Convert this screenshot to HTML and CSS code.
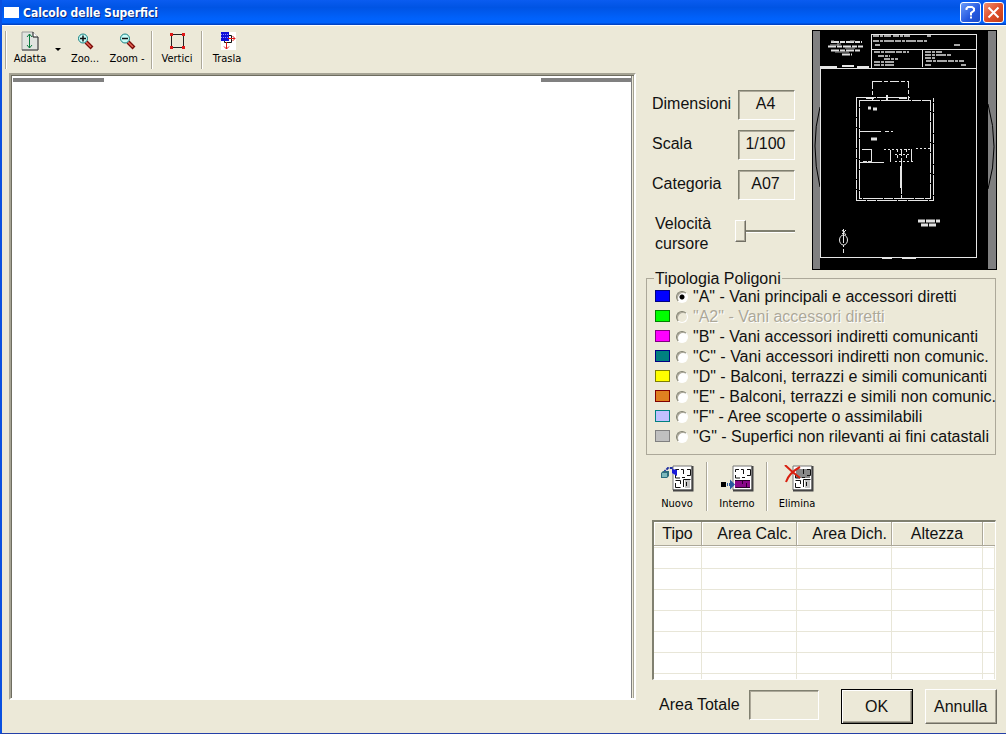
FILE: index.html
```html
<!DOCTYPE html>
<html lang="it">
<head>
<meta charset="utf-8">
<title>Calcolo delle Superfici</title>
<link rel="stylesheet" href="styles.css">
</head>
<body>
<div class="window">
  <header class="titlebar">
    <span class="app-icon"></span>
    <h1 class="title">Calcolo delle Superfici</h1>
    <button class="win-btn help" type="button" aria-label="Guida">
      <svg width="13" height="15" viewBox="0 0 13 15" fill="none" stroke="#fff" stroke-width="2"><path d="M2.500 5V3.500L4 2h4l2 1.500v2L7 8v2.500"/><path d="M6 12.500h2"/></svg>
    </button>
    <button class="win-btn close" type="button" aria-label="Chiudi">
      <svg width="13" height="13" viewBox="0 0 13 13" stroke="#fff" stroke-width="2"><path d="M1.500 1.500l10 10M11.500 1.500l-10 10"/></svg>
    </button>
  </header>

  <main class="content">
    <section class="left">
      <nav class="toolbar" aria-label="Strumenti">
        <button class="tool fit" type="button">
          <svg width="20" height="20" viewBox="0 0 20 20"><path d="M2 1h11l5 5v13H2z" fill="#e0e4e0" stroke="#999"/><path d="M13 1v5h5" fill="#fff" stroke="#111"/><path d="M18 6v13H2" fill="none" stroke="#444"/><path d="M9.500 3v14M7 6l2.500-3L12 6M7 14l2.500 3 2.500-3" fill="none" stroke="#087a3c"/></svg>
          <span>Adatta</span>
        </button>
        <button class="drop" type="button" aria-label="Opzioni adatta"><svg width="6" height="4" viewBox="0 0 6 4"><path d="M0 0h6L3 3z"/></svg></button>
        <button class="tool" type="button">
          <svg width="20" height="20" viewBox="0 0 20 20"><path d="M11 11l6 6" stroke="#7b0b08" stroke-width="4"/><path d="M11 11l5 5" stroke="#e86858" stroke-width="1.500"/><circle cx="8" cy="7.500" r="4.500" fill="#c8fcf8" stroke="#158080"/><path d="M5 7.500h6M8 4.500v6" stroke="#111" stroke-width="1.500"/></svg>
          <span>Zoo...</span>
        </button>
        <button class="tool" type="button">
          <svg width="20" height="20" viewBox="0 0 20 20"><path d="M11 11l6 6" stroke="#7b0b08" stroke-width="4"/><path d="M11 11l5 5" stroke="#e86858" stroke-width="1.500"/><circle cx="8" cy="7.500" r="4.500" fill="#c8fcf8" stroke="#158080"/><path d="M5 7.500h6" stroke="#111" stroke-width="1.500"/></svg>
          <span>Zoom -</span>
        </button>
        <span class="sep"></span>
        <button class="tool" type="button">
          <svg width="20" height="20" viewBox="0 0 20 20"><path d="M4.500 3.500h12v13h-12z" fill="none" stroke="#222"/><path d="M3 2h3v3H3zM15 2h3v3h-3zM3 15h3v3H3zM15 15h3v3h-3z" fill="#e01818"/></svg>
          <span>Vertici</span>
        </button>
        <span class="sep"></span>
        <button class="tool" type="button">
          <svg width="20" height="20" viewBox="0 0 20 20"><path d="M4 1h15v18H4z" fill="#fff"/><path d="M11 4.500h3.500v7h-7V9" fill="none" stroke="#111"/><path d="M4 1h8v9H4z" fill="#1010d8"/><path d="M4 3.500h8M4 6.500h8" stroke="#8c8cff" stroke-dasharray="1 1"/><path d="M11 7.500h7M15.500 5L18 7.500 15.500 10M9.500 11v7M7 15.500L9.500 18l2.500-2.500" fill="none" stroke="#e01818"/></svg>
          <span>Trasla</span>
        </button>
      </nav>
      <div class="canvas"><span class="scroll-mark"></span><span class="scroll-mark"></span></div>
    </section>

    <section class="right">
      <div class="summary">
        <form class="fields">
          <label for="dim">Dimensioni</label><input id="dim" class="sunken" value="A4" readonly>
          <label for="sca">Scala</label><input id="sca" class="sunken" value="1/100" readonly>
          <label for="cat">Categoria</label><input id="cat" class="sunken" value="A07" readonly>
          <label for="vel" class="speed">Velocità cursore</label><input id="vel" class="slider" type="range" min="0" max="10" value="0">
        </form>
        <svg class="preview" viewBox="0 0 185 240" role="img" aria-label="Planimetria">
          <path d="M0 0h185v240H0z"/>
          <path d="M1 1h7v238H1zM176 1h8v238h-8z" fill="#808080"/>
          <path d="M8 77Q-2 115 8 157M176 74q12 43 0 85" fill="none" stroke="#000"/>
          <g fill="none" stroke="#e6e6e6" shape-rendering="crispEdges">
            <path d="M59.500 38V4.500h105V227.500H8.500V38.500h156M59.500 19.500h105M110.500 19v18"/>
            <path d="M8 37h17M30 36h12M45 37h12" stroke-width="2"/>
            <path d="M60.500 51h36v19h-36z" stroke-dasharray="9 2 4 2"/>
            <path d="M44.500 67v103.500h77V67.500M44 67.500h54M47.500 70h71v98h-71z" stroke-dasharray="20 1 9 1"/>
            <path d="M54 68h8M87 68h8M74.500 65v6" stroke-width="2"/>
            <path d="M48 101.500h21M73 101.500h4M79 101.500h2M50 119.500h9V132M48 132.500h24M78.500 120v12M99.500 119v13"/>
            <path d="M72 119.500h28M104 118.500h14M83 124.500h15M83 131.500h19" stroke-dasharray="2 2"/>
            <path d="M89.500 119v49" stroke-dasharray="7 2 13 1"/>
            <path d="M89 136v22" stroke-width="2"/>
            <path d="M85.500 119v12M94.500 119v12" stroke-dasharray="3 3"/>
            <path d="M70 228h10M90 228h14" stroke-width="2"/>
          </g>
          <g fill="none" stroke="#e0e0e0">
            <path d="M19 12h31M16 16.500h35M19 20.500h29M30 24.500h10" stroke-width="2" stroke-dasharray="8 1 5 1"/>
            <path d="M19 11h3M25 14h4M38 11h5M18 15h9M33 18h10M23 22h14" stroke="#aaa"/>
            <path d="M61 6h18M81 6h17M115 6h4M61 11h54M63 15h5M142 15h6M62 22h35M66 26h12M72 29h14M62 32h20M62 35h20M113 22h17M113 25h26M113 28h10M114 31h38M113 35h7M149 35h5" stroke-width="1.500" stroke-dasharray="6 1 3 1 10 1"/>
            <path d="M56 78h3M61 79h4M59 109h6" stroke-width="3"/><path d="M51 132h4M56 132h4" stroke-width="2"/>
            <path d="M106 191h22M109 195h15" stroke-width="3" stroke-dasharray="7 1 9 1"/>
          </g>
          <g fill="none" stroke="#e6e6e6"><path d="M31.500 199v24" stroke-dasharray="14 2 2 2"/><ellipse cx="31.500" cy="210" rx="4" ry="5"/><path d="M30 200l4 5M34 200l-4 4"/></g>
        </svg>
      </div>

      <fieldset class="types">
        <legend>Tipologia Poligoni</legend>
        <label class="type a"><i></i><input type="radio" name="t" checked><span>"A" - Vani principali e accessori diretti</span></label>
        <label class="type a2"><i></i><input type="radio" name="t" disabled><span>"A2" - Vani accessori diretti</span></label>
        <label class="type b"><i></i><input type="radio" name="t"><span>"B" - Vani accessori indiretti comunicanti</span></label>
        <label class="type c"><i></i><input type="radio" name="t"><span>"C" - Vani accessori indiretti non comunic.</span></label>
        <label class="type d"><i></i><input type="radio" name="t"><span>"D" - Balconi, terrazzi e simili comunicanti</span></label>
        <label class="type e"><i></i><input type="radio" name="t"><span>"E" - Balconi, terrazzi e simili non comunic.</span></label>
        <label class="type f"><i></i><input type="radio" name="t"><span>"F" - Aree scoperte o assimilabili</span></label>
        <label class="type g"><i></i><input type="radio" name="t"><span>"G" - Superfici non rilevanti ai fini catastali</span></label>
      </fieldset>

      <nav class="polybar" aria-label="Poligoni">
        <button class="poly" type="button">
          <svg width="34" height="28" viewBox="0 0 34 28"><path d="M13 1h19v24H13z" fill="#fff" stroke="#777"/><path d="M32.500 1v24.500H13" fill="none" stroke="#444" stroke-width="2"/><path d="M25 15h5v8h-5z" fill="#c4c4c4"/><path d="M15.500 7V4.500H19M21 4.500h2.500V9M27 4.500h3.500v6H27M15.500 10v3H20M22 12.500h3M15.500 15.500h5V19M15.500 18v4.500h5M23.500 22v-7.500h7M26.500 17v4" fill="none" stroke="#111"/><path d="M5 8V6l3-3h5" fill="none" stroke="#2030a0" stroke-width="2" stroke-dasharray="3 1"/><path d="M12 4l5 1v6l-5-3z" fill="#1818d8"/><path d="M1 8l2-2h6v5l-2 2H1z" fill="#2c6c7c"/><path d="M2 8h5v4H2z" fill="#7cb8bc"/></svg>
          <span>Nuovo</span>
        </button>
        <span class="sep"></span>
        <button class="poly" type="button">
          <svg width="34" height="28" viewBox="0 0 34 28"><path d="M13 1h19v24H13z" fill="#fff" stroke="#777"/><path d="M32.500 1v24.500H13" fill="none" stroke="#444" stroke-width="2"/><path d="M15.500 7V4.500H19M21 4.500h2.500V9M27 4.500h3.500v6H27M15.500 10v3H20M22 12.500h3" fill="none" stroke="#111"/><path d="M15 15h15v8H15z" fill="#8a088a"/><path d="M15 15.500h15M22.500 15v4M26.500 18v4M15.500 22.500H30" fill="none" stroke="#2c002c"/><path d="M1 17h5v5H1z"/><path d="M7 19.500h4" stroke="#2858a0" stroke-width="3" stroke-dasharray="1 1"/><path d="M10 14.500l5 5-5 5z" fill="#2858a0"/></svg>
          <span>Interno</span>
        </button>
        <span class="sep"></span>
        <button class="poly" type="button">
          <svg width="34" height="28" viewBox="0 0 34 28"><path d="M13 1h19v24H13z" fill="#fff" stroke="#777"/><path d="M32.500 1v24.500H13" fill="none" stroke="#444" stroke-width="2"/><path d="M16 4h14v9H16z" fill="#888"/><path d="M25 15h5v8h-5z" fill="#c4c4c4"/><path d="M23.500 4v5M27 4.500h3.500v6H27M15.500 10v3H20M22 12.500h3M15.500 15.500h5V19M15.500 18v4.500h5M23.500 22v-7.500h7M26.500 17v4" fill="none" stroke="#111"/><path d="M5 0q6 6 15 13M20 2Q9 8 6 17" fill="none" stroke="#d82010" stroke-width="2"/></svg>
          <span>Elimina</span>
        </button>
      </nav>

      <div class="grid-box">
        <table class="grid">
          <colgroup><col class="c1"><col class="c2"><col class="c2"><col class="c4"><col></colgroup>
          <thead><tr><th>Tipo</th><th class="num">Area Calc.</th><th class="num">Area Dich.</th><th>Altezza</th><th></th></tr></thead>
          <tbody>
            <tr class="thin"><td></td><td></td><td></td><td></td><td></td></tr>
            <tr><td></td><td></td><td></td><td></td><td></td></tr>
            <tr><td></td><td></td><td></td><td></td><td></td></tr>
            <tr><td></td><td></td><td></td><td></td><td></td></tr>
            <tr><td></td><td></td><td></td><td></td><td></td></tr>
            <tr><td></td><td></td><td></td><td></td><td></td></tr>
            <tr><td></td><td></td><td></td><td></td><td></td></tr>
            <tr class="last"><td></td><td></td><td></td><td></td><td></td></tr>
          </tbody>
        </table>
      </div>

      <footer class="actions">
        <label for="tot">Area Totale</label>
        <input id="tot" class="sunken total" readonly>
        <button class="btn default" type="button">OK</button>
        <button class="btn" type="button">Annulla</button>
      </footer>
    </section>
  </main>
</div>
</body>
</html>
```
FILE: styles.css
```css
* { box-sizing: border-box; }
body { margin: 0; font: 16px/20px "Liberation Sans", Arial, sans-serif; color: #111; }
button, input { font: inherit; color: inherit; }
button { padding: 0; border: 0; background: none; }
svg { display: block; }

.window {
  min-height: 100vh;
  display: flex;
  flex-direction: column;
  background: #ece9d8;
  border-left: 2px solid #0a50e0;
  border-bottom: 1px solid #2440a8;
}

.titlebar {
  display: flex;
  align-items: center;
  gap: 2px;
  height: 25px;
  padding: 0 2px;
  background: linear-gradient(#0a5cf0, #0054e4 30%, #0062fc 75%, #0062fc 90%, #003cb8);
}
.app-icon { width: 15px; height: 11px; background: #fff; }
.title {
  flex: 1;
  margin: 0 0 0 2px;
  font: bold 12px/20px "DejaVu Sans Condensed", "DejaVu Sans", sans-serif;
  color: #fff;
  text-shadow: 1px 1px #0a2a80;
}
.win-btn {
  display: grid;
  place-items: center;
  width: 21px;
  height: 21px;
  border: 1px solid #fff;
  border-radius: 3px;
}
.help { background: linear-gradient(135deg, #6c9cfa, #2458e0 60%, #1a4cc8); }
.close { background: linear-gradient(135deg, #f09070, #e0502c 50%, #c03c14); }

.content {
  flex: 1;
  display: grid;
  grid-template-columns: 1fr 351px;
  gap: 10px;
  padding: 5px 9px 8px 3px;
  border-top: 1px solid #fff;
}
.left { display: flex; flex-direction: column; padding-bottom: 25px; }

.toolbar {
  display: flex;
  align-items: stretch;
  height: 38px;
  margin-bottom: 4px;
  padding-left: 2px;
  border-left: 1px solid #aca899;
  box-shadow: inset 1px 0 #fff;
}
.tool, .poly {
  display: flex;
  flex-direction: column;
  align-items: center;
  width: 42px;
  font: 11px/15px "DejaVu Sans Condensed", "DejaVu Sans", sans-serif;
  color: #000;
  white-space: nowrap;
}
.fit { width: 44px; }
.drop { display: grid; place-items: center; width: 12px; }
.sep { width: 2px; margin: 0 3px; background: #aca899; border-right: 1px solid #fff; }

.canvas {
  flex: 1;
  display: flex;
  justify-content: space-between;
  margin-left: 4px;
  padding: 3px 2px;
  background: #fff;
  border: 2px solid;
  border-color: #a5a394 #fff #fff #a5a394;
  box-shadow: inset 1px 1px #6e6d60, inset -1px 0 #a5a394, inset -2px 0 #ece9d8, inset -3px 0 #808080;
}
.scroll-mark { width: 91px; height: 4px; background: #808080; }

.right { display: flex; flex-direction: column; }
.summary { display: flex; justify-content: space-between; margin-top: -1px; }
.fields {
  display: grid;
  grid-template-columns: 82px 1fr;
  grid-auto-rows: 30px;
  row-gap: 10px;
  column-gap: 4px;
  width: 148px;
  padding: 60px 0 0 6px;
  align-items: start;
}
.fields label { padding-top: 4px; }
.fields .speed { padding-left: 3px; }
.sunken {
  width: 100%;
  min-width: 0;
  height: 30px;
  padding: 0 2px 3px 0;
  text-align: center;
  background: #ece9d8;
  border: 1px solid;
  border-color: #808070 #fff #fff #808070;
  border-radius: 0;
  box-shadow: inset 1px 1px #aca899;
}
.slider { appearance: none; width: 60px; height: 24px; margin: 9px 0 0 -3px; background: none; }
.slider::-webkit-slider-runnable-track { height: 3px; background: #808070; border-bottom: 1px solid #fff; }
.slider::-webkit-slider-thumb {
  appearance: none;
  width: 11px;
  height: 22px;
  margin-top: -10px;
  background: #ece9d8;
  border: 1px solid;
  border-color: #fff #716f64 #716f64 #fff;
  box-shadow: inset -1px -1px #aca899;
}
.preview { width: 185px; height: 240px; }

.types {
  min-width: 0;
  margin: 0 1px 0 0;
  padding: 0 0 7px 7px;
  border: 1px solid #aca899;
}
.types legend { padding: 0 1px; line-height: 17px; }
.type { display: flex; align-items: center; height: 20px; white-space: nowrap; }
.type i { flex: none; width: 15px; height: 12px; margin: 0 6px 2px 1px; border: 1px solid; }
.type input {
  appearance: none;
  flex: none;
  width: 12px;
  height: 12px;
  margin: 0 5px 0 0;
  border: 1px solid;
  border-color: #808070 #fff #fff #808070;
  border-radius: 50%;
  background: #fff;
  box-shadow: inset 1px 1px #aca899;
}
.type input:checked { background: radial-gradient(circle, #000 2px, #fff 3px); }
.type input:disabled { background: #ece9d8; }
.type input:disabled + span { color: #aca899; text-shadow: 1px 1px #fff; }
.a i { background: #0000ff; border-color: #000080; }
.a2 i { background: #00ff00; border-color: #008000; }
.b i { background: #ff00ff; border-color: #800080; }
.c i { background: #008080; border-color: #000080; }
.d i { background: #ffff00; border-color: #808000; }
.e i { background: #e08020; border-color: #800000; }
.f i { background: #c0c0ff; border-color: #008080; }
.g i { background: #c0c0c0; border-color: #808080; }

.polybar { display: flex; height: 49px; margin: 7px 0 9px 4px; }
.poly { width: 54px; padding-top: 3px; }
.polybar .sep { margin: 0 2px; }
.poly span { margin-top: 3px; }

.grid-box {
  margin: 0 1px 0 6px;
  background: #fff;
  border: solid;
  border-color: #808070 #fff #fff #808070;
  border-width: 2px 1px 1px 2px;
}
.grid { width: 100%; table-layout: fixed; border-collapse: separate; border-spacing: 0; }
.c1 { width: 48px; }
.c2 { width: 95px; }
.c4 { width: 91px; }
.grid th {
  height: 24px;
  padding: 1px 4px 0;
  font-weight: normal;
  background: #ece9d8;
  border-right: 1px solid #aca899;
  border-bottom: 1px solid #aca899;
  box-shadow: inset 1px 1px #fff;
}
.grid th:last-child { border-right: 0; }
.grid .num { text-align: right; }
.grid td { height: 21px; padding: 0; border: solid #e8e6d8; border-width: 0 1px 1px 0; }
.grid .thin td { height: 2px; }
.grid .last td { height: 5px; border-bottom: 0; }

.actions { display: flex; align-items: center; margin-top: 9px; padding-left: 12px; }
.actions label { margin: 0 9px 3px 1px; white-space: nowrap; }
.actions .total { width: 70px; margin: 0 22px 4px 0; }
.btn {
  flex: none;
  width: 72px;
  height: 35px;
  background: #ece9d8;
  border: 1px solid;
  border-color: #fff #716f64 #716f64 #fff;
  box-shadow: inset -1px -1px #aca899;
}
.default { margin-right: 12px; border-color: #000; box-shadow: inset 1px 1px #fff, inset -1px -1px #716f64, inset -2px -2px #aca899; }
```
